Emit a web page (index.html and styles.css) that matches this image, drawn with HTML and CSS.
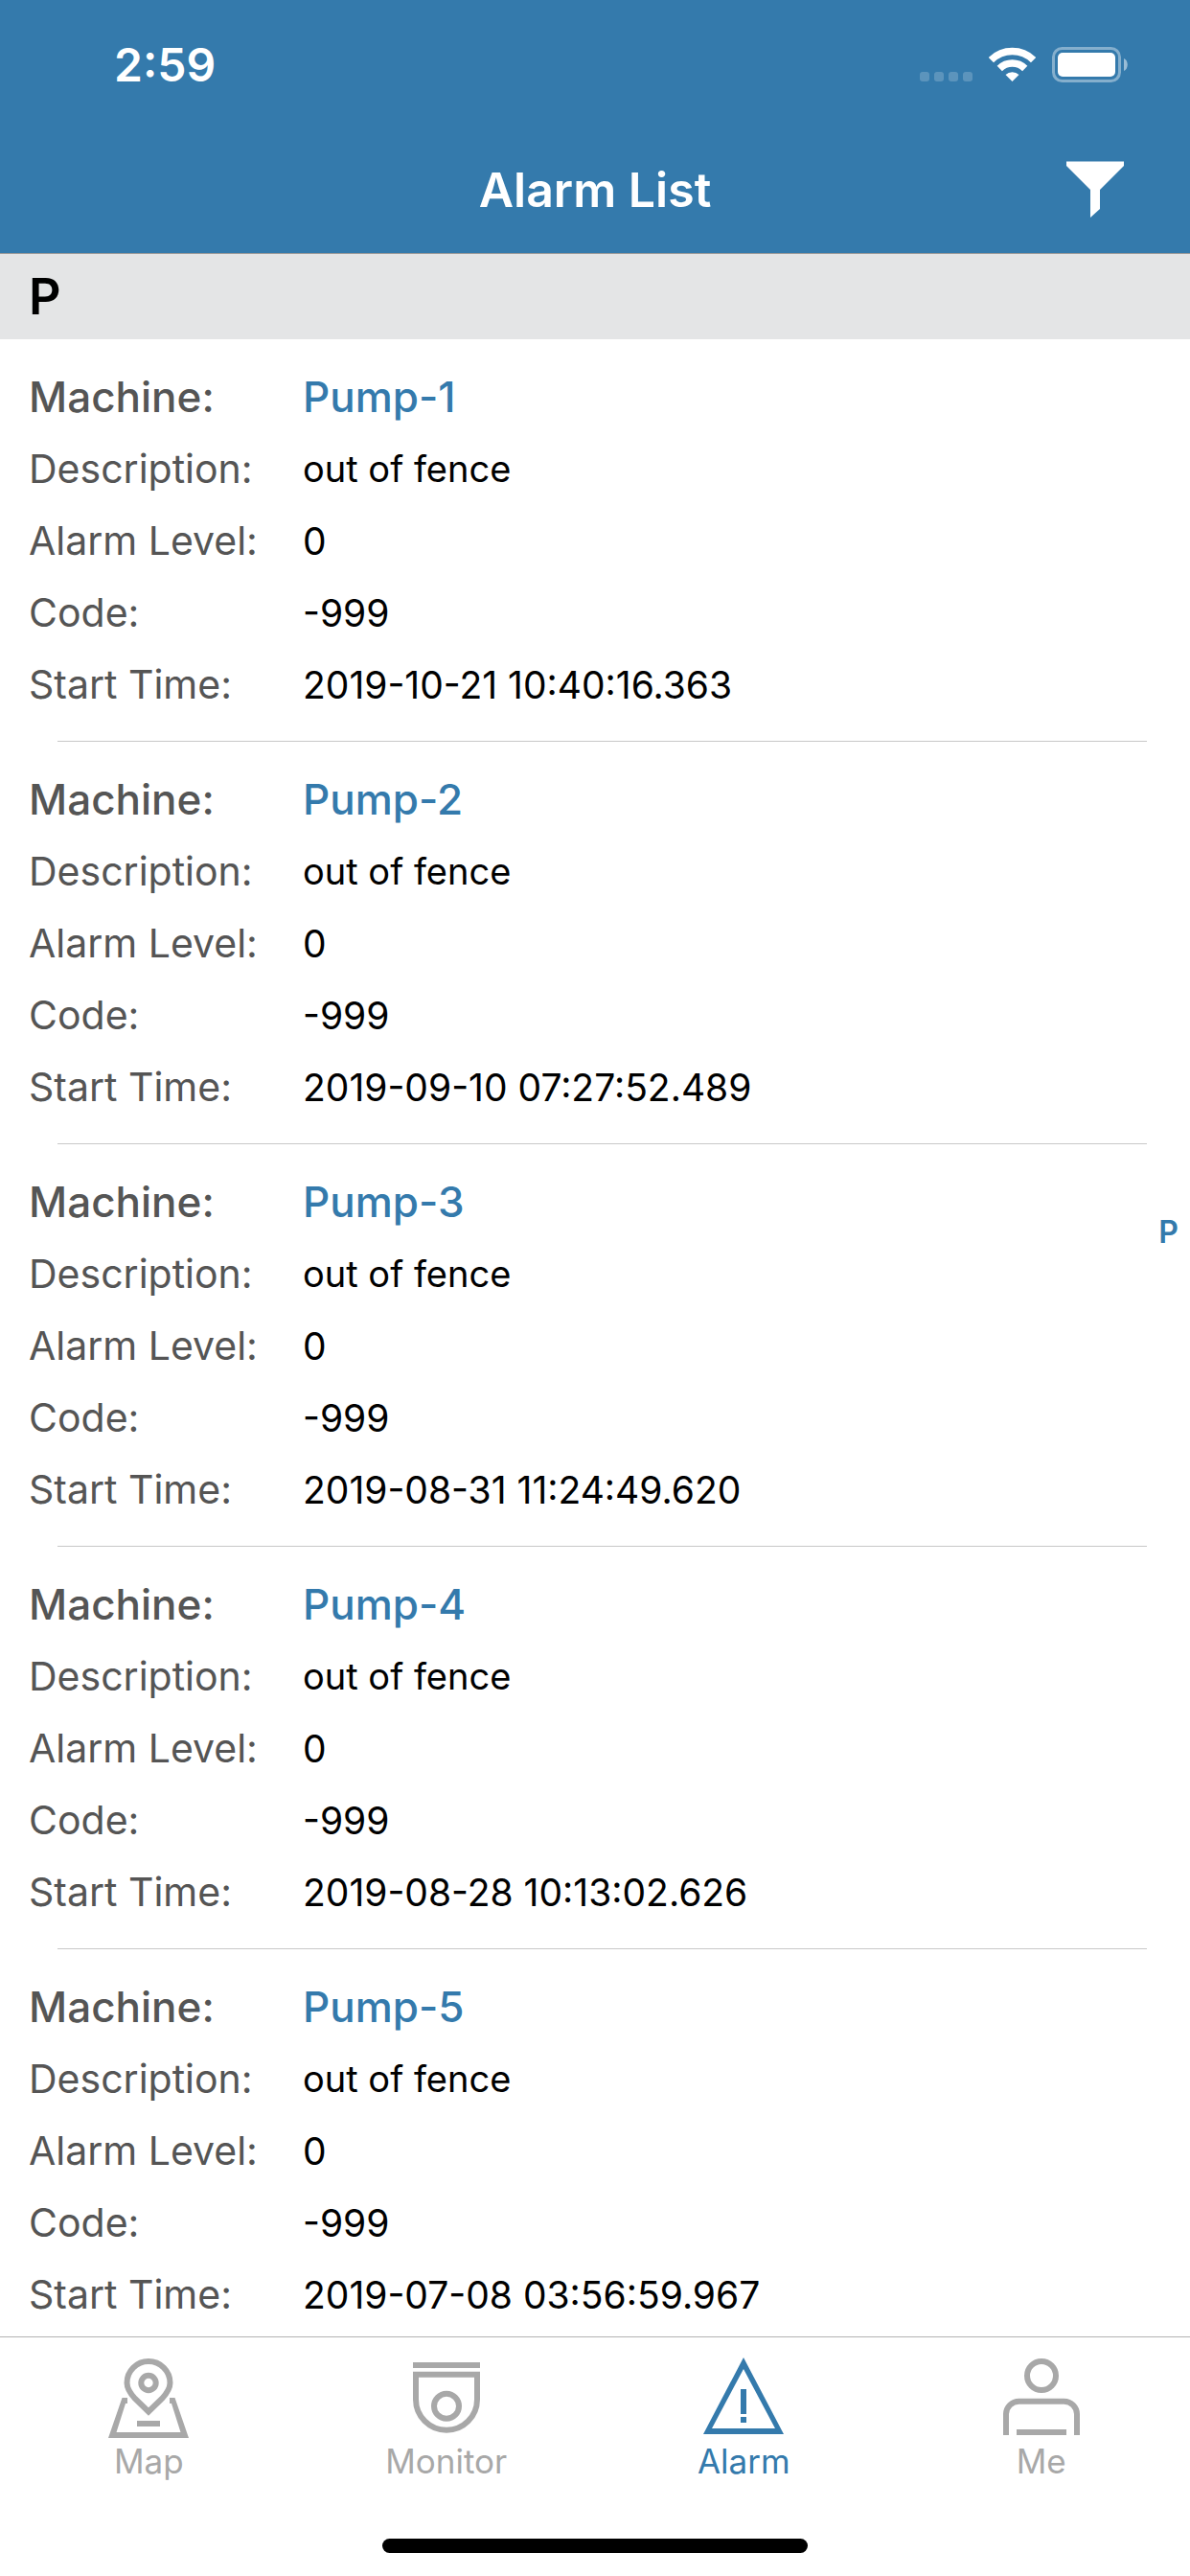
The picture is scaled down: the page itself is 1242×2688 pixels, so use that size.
FILE: index.html
```html
<!DOCTYPE html>
<html lang="en">
<head>
  <meta charset="utf-8">
  <meta name="viewport" content="width=device-width, initial-scale=1">
  <title>Alarm List</title>
  <link rel="stylesheet" href="styles.css">
</head>
<body>
  <div class="app">
    <header class="header">
      <div class="status">
        <time class="status-time">2:59</time>
        <div class="status-icons">
          <svg width="55" height="36" viewBox="0 0 55 36" fill="#fff" fill-opacity=".2" aria-hidden="true">
            <rect x="0" y="26" width="10" height="10" rx="3"/>
            <rect x="15" y="26" width="10" height="10" rx="3"/>
            <rect x="30" y="26" width="10" height="10" rx="3"/>
            <rect x="45" y="26" width="10" height="10" rx="3"/>
          </svg>
          <svg width="49" height="36" viewBox="0 0 49 36" fill="none" stroke="#fff" stroke-width="7.5" aria-hidden="true">
            <path d="M2.4 13.6A31.5 31.5 0 0 1 46.6 13.6"/>
            <path d="M11.3 22.5A18.8 18.8 0 0 1 37.7 22.5"/>
            <path d="M24.5 36L17.5 29A10 10 0 0 1 31.5 29Z" fill="#fff" stroke="none"/>
          </svg>
          <svg width="79" height="37" viewBox="0 0 79 37" fill="#fff" aria-hidden="true">
            <rect x="1.5" y="1.5" width="69" height="34" rx="9" fill="none" stroke="#fff" stroke-opacity=".4" stroke-width="3"/>
            <rect x="6" y="6" width="60" height="25" rx="5"/>
            <path d="M75 12C80 14 80 23 75 25Z" fill-opacity=".5"/>
          </svg>
        </div>
      </div>
      <div class="navbar">
        <h1 class="title">Alarm List</h1>
        <button class="filter" type="button" aria-label="Filter">
          <svg width="60" height="60" viewBox="0 0 60 60" fill="#fff" aria-hidden="true">
            <path d="M0 0.5H60V5L35 30V50L25 59V30L0 5Z"/>
          </svg>
        </button>
      </div>
    </header>

    <main class="list">
      <h2 class="section" id="p">P</h2>
      <dl class="alarm">
        <dt class="lead">Machine:</dt><dd class="lead">Pump-1</dd>
        <dt>Description:</dt><dd>out of fence</dd>
        <dt>Alarm Level:</dt><dd class="num">0</dd>
        <dt>Code:</dt><dd class="num">-999</dd>
        <dt>Start Time:</dt><dd class="num">2019-10-21 10:40:16.363</dd>
      </dl>
      <dl class="alarm">
        <dt class="lead">Machine:</dt><dd class="lead">Pump-2</dd>
        <dt>Description:</dt><dd>out of fence</dd>
        <dt>Alarm Level:</dt><dd class="num">0</dd>
        <dt>Code:</dt><dd class="num">-999</dd>
        <dt>Start Time:</dt><dd class="num">2019-09-10 07:27:52.489</dd>
      </dl>
      <dl class="alarm">
        <dt class="lead">Machine:</dt><dd class="lead">Pump-3</dd>
        <dt>Description:</dt><dd>out of fence</dd>
        <dt>Alarm Level:</dt><dd class="num">0</dd>
        <dt>Code:</dt><dd class="num">-999</dd>
        <dt>Start Time:</dt><dd class="num">2019-08-31 11:24:49.620</dd>
      </dl>
      <dl class="alarm">
        <dt class="lead">Machine:</dt><dd class="lead">Pump-4</dd>
        <dt>Description:</dt><dd>out of fence</dd>
        <dt>Alarm Level:</dt><dd class="num">0</dd>
        <dt>Code:</dt><dd class="num">-999</dd>
        <dt>Start Time:</dt><dd class="num">2019-08-28 10:13:02.626</dd>
      </dl>
      <dl class="alarm">
        <dt class="lead">Machine:</dt><dd class="lead">Pump-5</dd>
        <dt>Description:</dt><dd>out of fence</dd>
        <dt>Alarm Level:</dt><dd class="num">0</dd>
        <dt>Code:</dt><dd class="num">-999</dd>
        <dt>Start Time:</dt><dd class="num">2019-07-08 03:56:59.967</dd>
      </dl>
    </main>

    <nav class="index" aria-label="Section index"><a href="#p">P</a></nav>

    <footer class="footer">
      <nav class="tabs" aria-label="Main">
        <a class="tab" href="#map">
          <svg width="84" height="84" viewBox="0 0 84 84" fill="currentColor" aria-hidden="true">
            <path d="M14.5 42H20V48H18L8.5 78H75.5L66 48H64V42H69.5L84 84H0Z"/>
            <rect x="30" y="66" width="24" height="6"/>
            <g fill="none" stroke="currentColor" stroke-width="6">
              <path d="M42 56.5L28 43C22.5 37 19.5 32.5 19.5 26.5A22.5 22.5 0 0 1 64.5 26.5C64.5 32.5 61.5 37 56 43Z"/>
              <circle cx="42" cy="26.5" r="7.7"/>
            </g>
          </svg>
          <span>Map</span>
        </a>
        <a class="tab" href="#monitor">
          <svg width="84" height="84" viewBox="0 0 84 84" fill="none" stroke="currentColor" stroke-width="6" aria-hidden="true">
            <path d="M7 8H77"/>
            <path d="M10 17.7H74V43.7A32 32 0 0 1 10 43.7Z"/>
            <circle cx="42" cy="50.7" r="13"/>
          </svg>
          <span>Monitor</span>
        </a>
        <a class="tab active" href="#alarm" aria-current="page">
          <svg width="84" height="84" viewBox="0 0 84 84" fill="currentColor" aria-hidden="true">
            <path fill-rule="evenodd" d="M42 0L84 80H0ZM42 12L9 74H75Z"/>
            <rect x="39" y="33" width="6" height="26"/>
            <rect x="39" y="62" width="6" height="6"/>
          </svg>
          <span>Alarm</span>
        </a>
        <a class="tab" href="#me">
          <svg width="84" height="84" viewBox="0 0 84 84" fill="none" stroke="currentColor" stroke-width="6" aria-hidden="true">
            <circle cx="42" cy="19" r="15"/>
            <path d="M5 81V59A13.5 13.5 0 0 1 18.5 45.7H65.5A13.5 13.5 0 0 1 79 59V81"/>
            <path d="M16 78H68"/>
          </svg>
          <span>Me</span>
        </a>
      </nav>
      <div class="home-bar"></div>
    </footer>
  </div>
</body>
</html>
```

FILE: styles.css
```css
:root {
  --blue: #347aac;
  --label: #555;
  --muted: #a8a8a8;
}

* {
  box-sizing: border-box;
}

body,
h1,
h2,
dl,
dd {
  margin: 0;
}

body {
  background: #fff;
  color: #000;
  font-family: Inter, "Liberation Sans", sans-serif;
}

svg {
  display: block;
}

a {
  color: inherit;
  text-decoration: none;
}

.app {
  position: relative;
  display: flex;
  flex-direction: column;
  height: 100vh;
}

/* Header */
.header {
  flex: none;
  background: var(--blue);
  border-bottom: 1px solid #999;
  color: #fff;
}

.status {
  display: flex;
  justify-content: space-between;
  align-items: center;
  height: 132px;
  padding: 3px 65px 0 119px;
}

.status-time {
  font-size: 48px;
  font-weight: 600;
}

.status-icons {
  display: flex;
  gap: 17px;
}

.navbar {
  display: grid;
  grid-template-columns: 1fr auto 1fr;
  align-items: center;
  height: 132px;
  padding: 0 69px;
}

.title {
  grid-column: 2;
  font-size: 50px;
  font-weight: 600;
}

.filter {
  justify-self: end;
  padding: 0;
  border: 0;
  background: none;
}

/* Alarm list */
.list {
  flex: 1;
  min-height: 0;
  overflow-y: auto;
  scrollbar-width: none;
}

.section {
  padding: 0 30px;
  background: #e4e5e6;
  font-size: 52px;
  font-weight: 600;
  line-height: 89px;
}

.alarm {
  display: grid;
  grid-template-columns: 286px 1fr;
  padding: 23px 30px 21px;
  line-height: 75px;
}

.alarm + .alarm {
  padding-top: 0;
}

.alarm + .alarm::before {
  content: "";
  grid-column: 1 / -1;
  height: 1px;
  margin: 0 15px 23px 30px;
  background: #c8c8c8;
}

.alarm dt {
  color: var(--label);
  font-size: 41px;
}

.alarm dd {
  font-size: 38px;
}

.alarm .num {
  font-size: 39px;
}

.alarm .lead {
  font-size: 44px;
  font-weight: 500;
}

.alarm dd.lead {
  color: var(--blue);
}

.index {
  position: absolute;
  top: 132px;
  right: 0;
  bottom: 250px;
  display: flex;
  align-items: center;
  padding: 0 12px;
  color: var(--blue);
  font-size: 32px;
  font-weight: 600;
}

/* Tab bar */
.footer {
  flex: none;
  border-top: 1px solid #b2b2b2;
  padding: 21px 0 24px;
}

.tabs {
  display: grid;
  grid-template-columns: repeat(4, 1fr);
}

.tab {
  display: flex;
  flex-direction: column;
  align-items: center;
  color: var(--muted);
  font-size: 35px;
  line-height: 48px;
}

.tab.active {
  color: var(--blue);
}

.home-bar {
  width: 444px;
  height: 15px;
  margin: 57px auto 0;
  border-radius: 8px;
  background: #000;
}
```
